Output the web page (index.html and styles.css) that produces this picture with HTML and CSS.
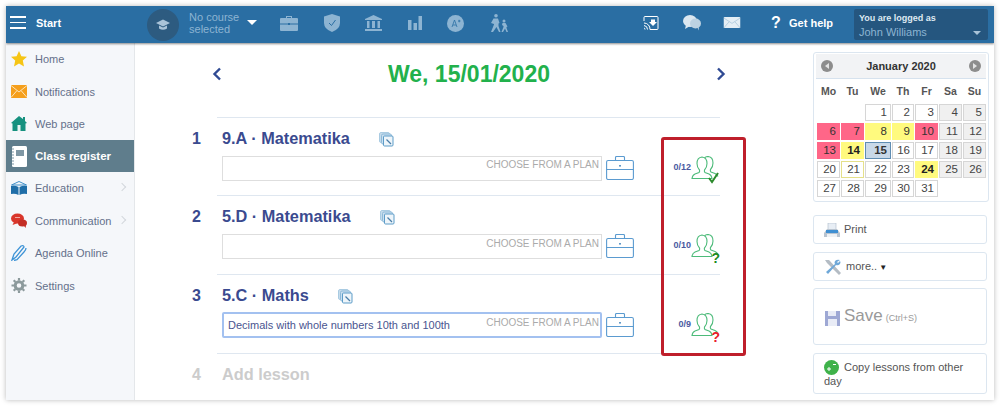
FILE: index.html
```html
<!DOCTYPE html>
<html lang="en">
<head>
<meta charset="utf-8">
<title>Class register</title>
<link rel="stylesheet" href="styles.css">
</head>
<body>
<svg class="defs" width="0" height="0" aria-hidden="true">
  <symbol id="brief" viewBox="0 0 28 24"><g fill="none" stroke="#5b9bd0" stroke-width="1.100"><rect x=".6" y="4.500" width="26.800" height="19" rx="1.500"/><path d="M.6 13.500h26.800M9.500 4.500V1.500q0-1 1-1h7q1 0 1 1v3"/></g><rect x="13.200" y="9" width="1.600" height="1.600" fill="#3b7fb8"/></symbol>
  <symbol id="copy" viewBox="0 0 15 15"><rect x="0.500" y="0.500" width="10" height="10" rx="1.500" fill="#c6dcec" stroke="#a9cbe2"/><rect x="2.500" y="2" width="10" height="10" rx="1.500" fill="#c9dff0" stroke="#8fbad8"/><rect x="4.500" y="4" width="9.500" height="10" rx="1" fill="#eef5fa" stroke="#5d9cc8"/><path d="M7.500 7.500l4.500 4.500" stroke="#4a7ea8" stroke-width="1.300"/></symbol>
  <symbol id="users" viewBox="0 0 29 24"><g fill="none" stroke="#4dbb7a" stroke-width="1.100"><path d="M1 22.500q.5-3.500 3-4.500l4-1.500q1-1 .5-2.500-2.500-2.500-2.500-6.500 0-6 5-6.500 5 .5 5 6.500 0 4-2.500 6.500-.5 1.500.5 2.500l4 1.500q2.500 1 3 4.500z"/><path d="M13.500 1.800q1.500-1.300 3.500-1.300 5 .5 5 6.500 0 4-2.500 6.500-.5 1.500.5 2.500l4 1.500q2 1 3 3"/></g></symbol>
</svg>
<div class="app">
  <header class="topbar">
    <span class="burger"><i></i><i></i><i></i></span>
    <span class="start">Start</span>
    <span class="course-badge"><svg width="14" height="12" viewBox="0 0 14 12"><path d="M7 .5L14 4 7 7.500 0 4z" fill="#a9c3d8"/><path d="M3 6.500v3q4 2.500 8 0v-3L7 8.500z" fill="#a9c3d8"/></svg></span>
    <span class="course-name">No course<br>selected</span>
    <span class="caret"></span>
    <nav class="top-icons">
      <svg width="18" height="16" viewBox="0 0 18 16"><path d="M6 3V1h6v2h5q1 0 1 1v11q0 1-1 1H1q-1 0-1-1V4q0-1 1-1zM7 3h4V2H7z" fill="#8db4d2"/><path d="M0 9h18" stroke="#2a6ea3"/><rect x="8" y="8" width="2" height="2" fill="#2a6ea3"/></svg>
      <svg width="16" height="18" viewBox="0 0 16 18"><path d="M8 0l8 2.500V9q0 6-8 9-8-3-8-9V2.500z" fill="#8db4d2"/><path d="M5 9l2.500 2.500L11.500 6" fill="none" stroke="#2a6ea3" stroke-width="1"/></svg>
      <svg width="17" height="16" viewBox="0 0 17 16"><path d="M8.500 0L17 4v1H0V4zM2 6h2.500v7H2zM7 6h3v7H7zM12.500 6H15v7h-2.500zM0 14h17v2H0z" fill="#8db4d2"/></svg>
      <svg width="14" height="14" viewBox="0 0 14 14"><path d="M0 4h3.500v10H0zM5.500 7H9v7H5.500zM10.500 0H14v14h-3.500z" fill="#8db4d2"/></svg>
      <svg width="17" height="17" viewBox="0 0 17 17"><circle cx="8.500" cy="8.500" r="8.500" fill="#8db4d2"/><path d="M5 12l2.500-7 2.500 7M6 10h3M11 6h2.500M12.200 4.800v2.500" fill="none" stroke="#2a6ea3" stroke-width=".8"/></svg>
      <svg width="19" height="18" viewBox="0 0 19 18"><g fill="#8db4d2"><circle cx="6" cy="1.800" r="1.800"/><path d="M3.500 4.500h4.500l1.500 4.500-1 .5V12l2 6H9l-2.500-5L3 18H1l3-7.500V10L1 9z"/><circle cx="14" cy="7" r="1.500"/><path d="M12.500 9h3l2 3.500-1 .5v1l1.500 4h-1.500L15 14.500 13 18h-1.500l2-5v-1l-1.500-1z"/></g></svg>
    </nav>
    <div class="top-right">
      <div class="tools">
        <svg width="16" height="14" viewBox="0 0 16 14"><path d="M1 5V1.500q0-1 1-1h12q1 0 1 1v11q0 1-1 1H7" fill="none" stroke="#fff"/><path d="M8 3.500h4v2.500h2L10 10 6 6h2z" fill="#fff"/><path d="M1 7a6 6 0 0 1 6 6.500M1 9.500a4 4 0 0 1 3.500 4M1 12a1.500 1.500 0 0 1 1 1.500" fill="none" stroke="#fff"/></svg>
        <svg class="chat" width="18" height="16" viewBox="0 0 18 16"><ellipse cx="7" cy="6" rx="7" ry="6" fill="#dbe7f0"/><path d="M3 10l-1 4 5-3z" fill="#dbe7f0"/><ellipse cx="12.500" cy="8.500" rx="5.500" ry="5" fill="#bcd2e2"/><path d="M14 12l2 3.500-.5-5z" fill="#bcd2e2"/></svg>
        <svg class="mail" width="18" height="11" viewBox="0 0 18 12"><rect width="18" height="12" rx="1" fill="#e4eef5"/><path d="M0 1l9 6 9-6M0 12l6-7M18 12l-6-7" fill="none" stroke="#a8c5da" stroke-width=".8"/></svg>
        <span class="qmark">?</span>
        <span class="help">Get help</span>
      </div>
      <div class="user-box">
        <div class="user-label">You are logged as</div>
        <div class="user-name">John Williams<span class="user-caret"></span></div>
      </div>
    </div>
  </header>
  <div class="body">
    <aside class="sidebar">
      <a class="side-item"><svg width="16" height="16" viewBox="0 0 16 16"><path d="M8 0l2.400 5.200 5.600.6-4.200 3.800 1.200 5.800L8 12.500 3 15.400l1.200-5.800L0 5.800l5.600-.6z" fill="#f6c515"/></svg>Home</a>
      <a class="side-item"><svg width="16" height="13" viewBox="0 0 16 13"><rect width="16" height="13" fill="#f59f1c"/><path d="M0 .5l8 6.500 8-6.500M0 12.500l6-7M16 12.500l-6-7" fill="none" stroke="#fde4b8"/></svg>Notifications</a>
      <a class="side-item"><svg width="16" height="15" viewBox="0 0 16 15"><path d="M8 0l4 3V1h2v4l2 2-1.500.5V15H1.500V7.500L0 7z" fill="#16917f"/><rect x="6.500" y="9" width="3" height="6" fill="#eaf5f3"/></svg>Web page</a>
      <a class="side-item active"><svg width="16" height="21" viewBox="0 0 16 21"><rect x="1" width="15" height="21" rx="1.500" fill="#fff"/><rect x="5" y="4" width="8" height="6" fill="#7f97a4"/><path d="M1 3h2M1 6h2M1 9h2M1 12h2M1 15h2M1 18h2" stroke="#7f97a4"/></svg>Class register</a>
      <a class="side-item"><svg width="16" height="15" viewBox="0 0 16 15"><path d="M8 .5l7.500 3.500H.5z" fill="none" stroke="#3f8fc9"/><path d="M0 5q4-1 7.500 1v8Q4 12 0 13zM16 5q-4-1-7.500 1v8q3.500-2 7.500-1z" fill="#1f6ea8"/></svg>Education<span class="chev"></span></a>
      <a class="side-item"><svg width="16" height="16" viewBox="0 0 16 16"><ellipse cx="6.500" cy="5.500" rx="6.500" ry="5" fill="#d9362b"/><path d="M3 9L1.500 12 7 10z" fill="#d9362b"/><ellipse cx="11.500" cy="10" rx="4.500" ry="3.500" fill="#c42e25"/><path d="M13 13l2 2-.5-4z" fill="#c42e25"/><path d="M4 4.500h5" stroke="#f2a8a2"/></svg>Communication<span class="chev"></span></a>
      <a class="side-item"><svg width="16" height="16" viewBox="0 0 16 16"><path d="M1 15l2-6L10 1q3-1 3 1L5 12zM3 15.500l3-.8 7-7.700q2-2 2-4" fill="none" stroke="#3d93d6" stroke-width="1.300"/></svg>Agenda Online</a>
      <a class="side-item"><svg width="15" height="15" viewBox="0 0 15 15"><circle cx="7.500" cy="7.500" r="3.800" fill="none" stroke="#8c9a9c" stroke-width="3"/><path d="M7.500 0v15M0 7.500h15M2.200 2.200l10.600 10.600M12.800 2.200L2.200 12.800" stroke="#8c9a9c" stroke-width="2.200" stroke-dasharray="2.500 10 2.500"/></svg>Settings</a>
    </aside>
    <main class="main">
      <div class="date-row">
        <svg width="10" height="14" viewBox="0 0 10 14"><path d="M8 1.500L2.500 7 8 12.500" fill="none" stroke="#2f4a93" stroke-width="2.400"/></svg>
        <h1 class="date">We, 15/01/2020</h1>
        <svg width="10" height="14" viewBox="0 0 10 14"><path d="M2 1.500L7.500 7 2 12.500" fill="none" stroke="#2f4a93" stroke-width="2.400"/></svg>
      </div>
      <section class="lesson first">
        <div class="num">1</div>
        <div class="lesson-body">
          <div class="lesson-main">
            <div class="title-line"><span class="title">9.A · Matematika</span><svg class="copy" width="15" height="15"><use href="#copy"/></svg></div>
            <div class="plan-line"><div class="plan"><span class="plan-text"></span><span class="choose">CHOOSE FROM A PLAN</span></div><svg class="brief" width="28" height="24"><use href="#brief"/></svg></div>
          </div>
          <div class="att"><span class="count">0/12</span><span class="people"><svg width="29" height="24"><use href="#users"/></svg><svg class="mark" width="14" height="12" viewBox="0 0 14 12"><path d="M2 6l3 4 6-9" fill="none" stroke="#2c8a2c" stroke-width="2"/></svg></span></div>
        </div>
      </section>
      <section class="lesson">
        <div class="num">2</div>
        <div class="lesson-body">
          <div class="lesson-main">
            <div class="title-line"><span class="title">5.D · Matematika</span><svg class="copy" width="15" height="15"><use href="#copy"/></svg></div>
            <div class="plan-line"><div class="plan"><span class="plan-text"></span><span class="choose">CHOOSE FROM A PLAN</span></div><svg class="brief" width="28" height="24"><use href="#brief"/></svg></div>
          </div>
          <div class="att"><span class="count">0/10</span><span class="people"><svg width="29" height="24"><use href="#users"/></svg><span class="q green">?</span></span></div>
        </div>
      </section>
      <section class="lesson">
        <div class="num">3</div>
        <div class="lesson-body">
          <div class="lesson-main">
            <div class="title-line"><span class="title">5.C · Maths</span><svg class="copy" width="15" height="15"><use href="#copy"/></svg></div>
            <div class="plan-line"><div class="plan focus"><span class="plan-text">Decimals with whole numbers 10th and 100th</span><span class="choose">CHOOSE FROM A PLAN</span></div><svg class="brief" width="28" height="24"><use href="#brief"/></svg></div>
          </div>
          <div class="att"><span class="count">0/9</span><span class="people"><svg width="29" height="24"><use href="#users"/></svg><span class="q red">?</span></span></div>
        </div>
      </section>
      <section class="lesson add">
        <div class="num">4</div>
        <div class="lesson-body"><span class="title">Add lesson</span></div>
      </section>
      <div class="highlight"></div>
    </main>
    <aside class="right">
      <div class="calendar">
        <div class="cal-head"><span class="cal-nav"><i class="tri left"></i></span><span class="cal-title">January 2020</span><span class="cal-nav"><i class="tri rgt"></i></span></div>
        <div class="cal-grid">
          <span class="wd">Mo</span><span class="wd">Tu</span><span class="wd">We</span><span class="wd">Th</span><span class="wd">Fr</span><span class="wd">Sa</span><span class="wd">Su</span>
          <span></span><span></span><span class="d">1</span><span class="d">2</span><span class="d">3</span><span class="d we">4</span><span class="d we">5</span>
          <span class="d pink">6</span><span class="d pink">7</span><span class="d yel">8</span><span class="d yel">9</span><span class="d pink">10</span><span class="d we">11</span><span class="d we">12</span>
          <span class="d pink">13</span><span class="d yel b">14</span><span class="d today">15</span><span class="d">16</span><span class="d">17</span><span class="d we">18</span><span class="d we">19</span>
          <span class="d">20</span><span class="d yb">21</span><span class="d">22</span><span class="d">23</span><span class="d yel b">24</span><span class="d we">25</span><span class="d we">26</span>
          <span class="d">27</span><span class="d">28</span><span class="d">29</span><span class="d">30</span><span class="d">31</span><span></span><span></span>
        </div>
      </div>
      <a class="btn print"><svg width="16" height="15" viewBox="0 0 16 15"><rect x="4" width="8" height="7" fill="#e8eef5" stroke="#aab8c8" stroke-width=".6"/><path d="M3 6h10l3 4v4H0v-4z" fill="#b9c4d0"/><rect x="2" y="7" width="12" height="3" fill="#3f8fd2"/><rect x="3" y="11" width="10" height="3" fill="#eef1f4"/></svg>Print</a>
      <a class="btn more"><svg width="18" height="16" viewBox="0 0 18 16"><path d="M1 1l4 0 12 13-2 2L3 4z" fill="#b4bcc4"/><path d="M16 1q-3-1-5 1-1 2 0 3L2 13l2 2 8-9q2 1 4-1 1-2 0-3l-2 2-1-1z" fill="#6fa8d8"/></svg>more..<span class="arr">▼</span></a>
      <a class="btn save"><svg width="15" height="15" viewBox="0 0 15 15"><rect width="15" height="15" fill="#9ea8d4"/><rect x="3" y="0" width="8" height="5" fill="#e9ecf6"/><rect x="3" y="8" width="9" height="7" fill="#e9ecf6"/></svg><span class="save-text">Save</span><small>(Ctrl+S)</small></a>
      <a class="btn copy-btn"><svg width="15" height="15" viewBox="0 0 15 15"><circle cx="7.500" cy="7.500" r="7.500" fill="#3fb24a"/><path d="M3 9h4M5 7v4M9 4.500h3" stroke="#fff"/></svg>Copy lessons from other day</a>
    </aside>
  </div>
</div>
</body>
</html>
```
FILE: styles.css
```css
* { box-sizing: border-box; }
html, body { margin: 0; padding: 0; background: #fff; }
body { width: 1000px; height: 406px; overflow: hidden; font-family: "Liberation Sans", Arial, sans-serif; }
.defs { position: absolute; }
.app { margin: 6px 0 0 6px; width: 988px; height: 394px; background: #fff; box-shadow: 0 0 5px rgba(0,0,0,.28); display: flex; flex-direction: column; overflow: hidden; }

.topbar { flex: none; height: 37px; background: #2a6ea3; box-shadow: 0 1px 2px rgba(0,0,0,.45); display: flex; align-items: center; position: relative; z-index: 2; color: #fff; }
.burger { display: flex; flex-direction: column; gap: 4px; width: 16px; margin: 0 0 4px 4px; }
.burger i { display: block; height: 1.500px; background: #fff; }
.start { margin: 0 0 4px 10px; font-size: 11px; font-weight: bold; }
.course-badge { margin-left: 86px; width: 32px; height: 32px; border-radius: 50%; background: #2d5b80; display: flex; align-items: center; justify-content: center; }
.course-name { margin: 0 0 3px 10px; font-size: 11px; line-height: 12px; color: #8db4d2; width: 58px; }
.caret { width: 0; height: 0; margin-bottom: 4px; border: 5px solid transparent; border-top: 5px solid #fff; border-bottom: 0; }
.top-icons { margin: -3px 0 0 23px; display: flex; align-items: center; justify-content: space-between; width: 229px; }
.top-right { flex: 1; margin-left: 134px; display: flex; align-items: center; }
.tools { display: flex; align-items: center; margin-bottom: 4px; }
.chat { margin-left: 24px; }
.mail { margin-left: 22px; }
.qmark { margin-left: 30px; font-size: 16px; font-weight: bold; width: 18px; }
.help { font-size: 11px; font-weight: bold; white-space: nowrap; }
.user-box { margin-left: auto; margin-right: 6px; width: 134px; height: 31px; background: #25567f; border-radius: 2px; padding: 4px 5px; font-size: 9px; flex: none; }
.user-label { font-weight: bold; line-height: 10px; color: #dfeaf2; }
.user-name { position: relative; margin-top: 3px; font-size: 11px; line-height: 12px; color: #8db4d2; }
.user-caret { position: absolute; right: 2px; top: 5px; width: 0; height: 0; border: 4px solid transparent; border-top: 4px solid #a9c3d8; border-bottom: 0; }

.body { flex: 1; display: flex; min-height: 0; }
.sidebar { flex: none; width: 129px; background: #f5f7fa; border-right: 1px solid #e4e7ea; }
.side-item { display: flex; align-items: center; height: 32.400px; padding-left: 5px; font-size: 11px; color: #64708a; position: relative; }
.side-item svg { flex: none; width: 16px; margin-right: 8px; }
.side-item.active { height: 32px; background: #5f7d8c; color: #fff; font-weight: bold; font-size: 11.500px; }
.chev { position: absolute; right: 9px; top: 12px; width: 6px; height: 6px; border-top: 1px solid #d3d7dc; border-right: 1px solid #d3d7dc; transform: rotate(45deg); }

.main { flex: none; width: 678px; padding-left: 57px; position: relative; }
.date-row { margin-left: 20px; width: 514px; height: 74px; display: flex; align-items: center; justify-content: space-between; padding-bottom: 12px; }
.date { margin: 0; font-size: 23px; font-weight: bold; color: #22b14c; }
.lesson { display: flex; height: 79px; }
.lesson.first { height: 78px; }
.num { width: 25px; padding-top: 13px; font-size: 16px; font-weight: bold; color: #3a4a8f; }
.lesson-body { width: 503px; height: 100%; border-top: 1px solid #dfe7f0; padding-left: 5px; display: flex; }
.lesson-main { width: 453px; }
.title-line { height: 38px; display: flex; align-items: center; padding-top: 2px; }
.title { font-size: 16.300px; font-weight: bold; color: #3a4a8f; }
.copy { margin-left: 29px; margin-top: 2px; }
.plan-line { display: flex; align-items: flex-start; }
.plan { width: 380px; height: 25px; border: 1px solid #dedede; display: flex; justify-content: space-between; padding: 2px 2px 0 5px; }
.plan.focus { border: 2px solid #a3c1f0; border-radius: 2px; padding: 1px 1px 0 4px; height: 26px; margin-top: -1px; }
.plan-text { font-size: 11px; line-height: 20px; color: #4a5590; white-space: nowrap; }
.choose { font-size: 10px; line-height: 12px; color: #aaa; white-space: nowrap; }
.lesson:not(.first) .choose { padding-top: 1px; }
.lesson .focus .choose { padding-top: 2px; }
.brief { margin-left: 4px; }
.att { display: flex; align-items: flex-start; padding-top: 38px; padding-left: 2px; }
.count { font-size: 9px; font-weight: bold; color: #4a5a9f; width: 18px; text-align: right; margin-top: 6px; }
.people { position: relative; display: block; }
.mark { position: absolute; right: -1px; bottom: 0; }
.q { position: absolute; right: 0; bottom: -4px; font-size: 14px; font-weight: bold; }
.q.green { color: #1d8a1d; }
.q.red { color: #e8202a; }
.add .num { color: #ccc; }
.add .title { color: #ccc; margin-top: 11px; }
.highlight { position: absolute; left: 526px; top: 94px; width: 85px; height: 219px; border: 3px solid #bf1f2b; border-radius: 3px; pointer-events: none; }

.right { flex: none; padding-top: 9px; width: 176px; display: flex; flex-direction: column; }
.calendar { width: 176px; height: 150px; border: 1px solid #dce6f0; border-radius: 3px; padding: 1px 2px; }
.cal-head { height: 25px; background: #f2f3f5; border-bottom: 1px solid #d6e2ee; display: flex; align-items: center; justify-content: space-between; padding: 0 5px; }
.cal-title { font-size: 11px; font-weight: bold; color: #333; }
.cal-nav { width: 12px; height: 12px; border-radius: 50%; background: #8d8d8d; display: flex; align-items: center; justify-content: center; }
.tri { width: 0; height: 0; border: 3px solid transparent; }
.tri.left { border-right: 4px solid #e4e4e4; border-left: 0; }
.tri.rgt { border-left: 4px solid #e4e4e4; border-right: 0; }
.cal-grid { display: grid; grid-template-columns: 23px 23px 26px 22px 23px 23px 23px; column-gap: 1px; row-gap: 2px; grid-auto-rows: 17px; grid-template-rows: 20px; margin-left: 1px; padding-top: 3px; }
.wd { font-size: 10.500px; font-weight: bold; color: #555; text-align: center; line-height: 18px; }
.d { border: 1px solid #d6d6d6; font-size: 11.500px; line-height: 15px; text-align: right; padding-right: 3px; color: #444; background: #fff; }
.d.we { background: #f0f0f0; }
.d.pink { background: #ff6688; border-color: #ff6688; color: #333; }
.d.yel { background: #fffa7e; border-color: #fffa7e; color: #333; }
.d.b { font-weight: bold; color: #222; }
.d.yb { border-color: #e5e08a; }
.d.today { background: #c8d8e8; border-color: #5f8db3; font-weight: bold; color: #333; }

.btn { display: block; width: 174px; border: 1px solid #dce6f0; border-radius: 3px; font-size: 11px; color: #555; }
.btn svg { vertical-align: middle; margin-right: 4px; }
.print { margin-top: 13px; height: 29px; padding: 5px 10px; line-height: 16px; }
.more { margin-top: 8px; height: 29px; padding: 5px 10px; line-height: 16px; }
.arr { font-size: 8px; color: #222; margin-left: 2px; }
.save { margin-top: 7px; height: 57px; padding: 17px 11px 0; color: #999; }
.save-text { font-size: 17px; }
.save small { font-size: 9px; margin-left: 3px; }
.copy-btn { margin-top: 8px; height: 41px; padding: 6px 10px; line-height: 14px; }
.copy-btn svg { margin: -2px 5px -1px 0; }
```
